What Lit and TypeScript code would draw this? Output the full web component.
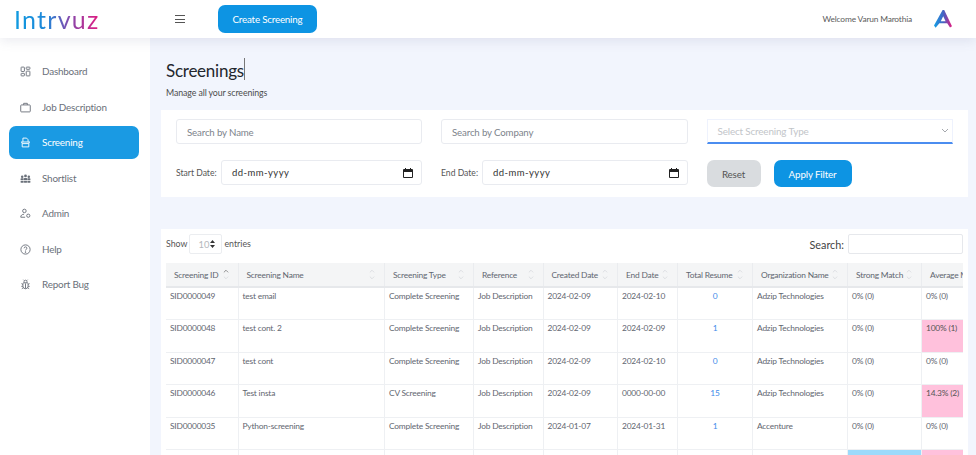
import { LitElement, html, css, svg } from "lit";
import { customElement } from "lit/decorators.js";

const icons: Record<string, unknown> = {
  dashboard: svg`<rect x="1.5" y="1.5" width="4.5" height="6" rx=".7"/><rect x="8.5" y="1.5" width="5" height="3" rx=".7"/><rect x="1.5" y="10" width="4.5" height="3.5" rx=".7"/><rect x="8.5" y="7" width="5" height="6.5" rx=".7"/>`,
  job: svg`<rect x="1" y="4" width="13" height="9.5" rx="1"/><path d="M5 4V1.8h5V4"/>`,
  screening: svg`<path d="M4 6.5V1.5h5l2 2.2v2.8M1.5 6.8h12M3 9h9v4.5H3zM3 9 2.4 6.8M12 9l.6-2.2"/>`,
  shortlist: svg`<g fill="currentColor" stroke="none"><circle cx="3" cy="5" r="1.7"/><circle cx="7.5" cy="4" r="1.9"/><circle cx="12" cy="5" r="1.7"/><rect x=".8" y="7.3" width="4.2" height="2.6" rx=".8"/><rect x="5.4" y="6.8" width="4.2" height="3.1" rx=".8"/><rect x="10" y="7.3" width="4.2" height="2.6" rx=".8"/><rect x=".8" y="10.8" width="4.2" height="2.4" rx=".6"/><rect x="5.4" y="10.8" width="4.2" height="2.4" rx=".6"/><rect x="10" y="10.8" width="4.2" height="2.4" rx=".6"/></g>`,
  admin: svg`<circle cx="6" cy="4" r="2.4"/><path d="M1 12.5c0-2.6 2-4 4.5-4"/><path d="M1 12.6h6"/><circle cx="11.3" cy="10.5" r="2.2"/>`,
  help: svg`<circle cx="7.5" cy="7.5" r="6.3"/><path d="M5.6 5.8c0-1.2.9-1.9 1.9-1.9s2 .7 2 1.8c0 1.5-2 1.6-2 3.2"/><circle cx="7.5" cy="11" r=".5" fill="currentColor"/>`,
  bug: svg`<path d="M5 5.2h5a1.3 1.3 0 0 1 1 1.2v3.4a3.5 3.5 0 0 1-7 0V6.4a1.3 1.3 0 0 1 1-1.2zM5.5 5V3.6a2 2 0 0 1 4 0V5M7.5 6v7M4 7.5 2 6.3M11 7.5l2-1.2M4 10H1.8M11 10h2.2M4.3 12l-1.8 1.3M10.7 12l1.8 1.3M5.5 2 4.6 1M9.5 2l.9-1"/>`,
};

const nav = [
  ["dashboard", "Dashboard"],
  ["job", "Job Description"],
  ["screening", "Screening"],
  ["shortlist", "Shortlist"],
  ["admin", "Admin"],
  ["help", "Help"],
  ["bug", "Report Bug"],
];

const cols: [string, number][] = [
  ["Screening ID", 72],
  ["Screening Name", 146.5],
  ["Screening Type", 89],
  ["Reference", 69.5],
  ["Created Date", 74.5],
  ["End Date", 60],
  ["Total Resume", 75],
  ["Organization Name", 95],
  ["Strong Match", 74],
  ["Average Match", 90],
];

const rows: { c: string[]; pink?: boolean }[] = [
  { c: ["SID0000049", "test email", "Complete Screening", "Job Description", "2024-02-09", "2024-02-10", "0", "Adzip Technologies", "0% (0)", "0% (0)"] },
  { c: ["SID0000048", "test cont. 2", "Complete Screening", "Job Description", "2024-02-09", "2024-02-09", "1", "Adzip Technologies", "0% (0)", "100% (1)"], pink: true },
  { c: ["SID0000047", "test cont", "Complete Screening", "Job Description", "2024-02-09", "2024-02-10", "0", "Adzip Technologies", "0% (0)", "0% (0)"] },
  { c: ["SID0000046", "Test insta", "CV Screening", "Job Description", "2024-02-09", "0000-00-00", "15", "Adzip Technologies", "0% (0)", "14.3% (2)"], pink: true },
  { c: ["SID0000035", "Python-screening", "Complete Screening", "Job Description", "2024-01-07", "2024-01-31", "1", "Accenture", "0% (0)", "0% (0)"] },
];

@customElement("app-root")
export class AppRoot extends LitElement {
  static styles = css`
    :host { display: block; width: 976px; height: 455px; overflow: hidden; font-family: Lato, "Open Sans", sans-serif; color: #5f6670; background: #f2f5fd; }
    .top { height: 38px; background: #fff; display: flex; align-items: center; position: relative; z-index: 2; box-shadow: 0 3px 12px rgba(90,100,140,.13); }
    .logo { width: 175px; padding-left: 14px; box-sizing: border-box; }
    .logo span { font-size: 25px; font-weight: 400; letter-spacing: 1.25px; line-height: 30px; display: inline-block; margin-top: -1px; background: linear-gradient(90deg, #0f9be0 0%, #1f86d8 38%, #7d4db0 62%, #e4197f 100%); -webkit-background-clip: text; background-clip: text; color: transparent; }
    .burger { width: 10px; height: 6px; border-top: 1px solid #555; border-bottom: 1px solid #555; margin-right: 33px; box-sizing: content-box; }
    .burger::after { content: ""; display: block; height: 1px; background: #555; margin-top: 2.5px; }
    .create { width: 99px; height: 28px; border: none; border-radius: 7px; background: #0d94e3; color: #fff; font: 400 9.8px Lato, sans-serif; letter-spacing: -.2px; padding: 0; }
    .welcome { margin-left: auto; font-size: 8.4px; letter-spacing: -.18px; color: #5c5c5c; margin-right: 22px; }
    .mark { width: 18px; height: 18px; margin-right: 24px; }
    .body { display: flex; height: 417px; }
    .side { width: 150px; background: #fff; padding: 17px 11px 0 9px; box-sizing: border-box; flex: none; display: grid; grid-auto-rows: 33px; row-gap: 2.5px; align-content: start; }
    .item { display: flex; align-items: center; padding-left: 11px; font-size: 9.9px; letter-spacing: -.2px; color: #6a7079; border-radius: 7px; }
    .item span { margin-top: -1px; }
    .item svg { width: 11px; height: 11px; margin-right: 11px; fill: none; stroke: currentColor; stroke-width: 1.25; flex: none; }
    .item.on { background: #1a9ae3; color: #fff; }
    .main { flex: 1; min-width: 0; padding: 0 8px 0 11px; }
    h1 { margin: 21px 0 0 5px; font-size: 17px; letter-spacing: -.25px; line-height: 24px; font-weight: 400; color: #23272e; display: flex; }
    .caret { width: 1px; height: 22px; background: #777; margin-top: -1px; }
    .sub { margin: 4px 0 0 5px; font-size: 8.8px; letter-spacing: -.1px; line-height: 12px; color: #4c4c4c; }
    .filter { margin-top: 11px; background: #fff; height: 87px; box-sizing: border-box; padding: 9px 15px 0; display: grid; grid-template-columns: 246px 246.5px 246px; column-gap: 19px; grid-template-rows: 25px 27px; row-gap: 16px; }
    .field { border: 1px solid #e9ebf0; border-radius: 3px; display: flex; align-items: center; padding: 0 10px; box-sizing: border-box; font-size: 9.7px; letter-spacing: -.15px; color: #7d838b; background: #fff; }
    .type { border: 1px solid #eef2fd; border-bottom: 2px solid #4b8df0; border-radius: 0; color: #c2c5c9; justify-content: space-between; height: 24.5px; font-size: 9.9px; padding-right: 3px; }
    .type svg { width: 8px; height: 6px; fill: none; stroke: #a5a8ad; }
    .dategroup { display: flex; align-items: flex-start; }
    .dategroup label { font-size: 8.6px; color: #555; line-height: 26px; }
    .start label { width: 45px; }
    .end label { width: 41px; }
    .date { flex: 1; height: 25px; justify-content: space-between; color: #333; font-size: 9.5px; letter-spacing: .45px; padding-right: 8px; }
    .date svg { width: 10px; height: 10px; flex: none; }
    .btns { display: flex; gap: 13px; }
    .btns span { height: 27px; display: flex; align-items: center; justify-content: center; border-radius: 7px; font-size: 9.8px; letter-spacing: -.15px; }
    .reset { width: 54px; background: #d9dcdf; color: #555; }
    .apply { width: 78px; background: #0d94e3; color: #fff; }
    .card { margin-top: 32px; background: #fff; height: 240px; box-sizing: border-box; padding: 5px 5px 0; }
    .tools { display: flex; align-items: center; height: 20px; font-size: 8.8px; color: #555; }
    .tools > span:first-child, .tools > span:nth-child(3) { margin-top: -2px; }
    .len { width: 33px; height: 20px; border: 1px solid #ebedf0; box-sizing: border-box; margin: 0 2px 0 2px; display: flex; align-items: center; justify-content: flex-end; padding-right: 6px; color: #b5b8bc; font-size: 9.4px; border-radius: 2px; }
    .len svg { width: 5px; height: 8px; margin-left: 1px; }
    .srch { margin-left: auto; font-size: 10.8px; color: #444; }
    .srchbox { width: 115px; height: 20px; border: 1px solid #e6e8ec; border-radius: 2px; box-sizing: border-box; margin-left: 4px; }
    .wrap { margin-top: 9px; overflow: hidden; width: 797px; height: 192px; }
    table { border-collapse: collapse; table-layout: fixed; width: 845.5px; font-size: 8.4px; letter-spacing: -.2px; color: #5f6670; }
    th { height: 24px; box-sizing: border-box; background: #f4f5f6; font-weight: 400; text-align: left; padding: 0 8px; border-right: 1px solid #eaecef; border-bottom: 2px solid #e6e8eb; white-space: nowrap; overflow: hidden; }
    th div { display: flex; align-items: center; justify-content: space-between; }
    th svg { width: 6px; height: 13px; fill: none; stroke: #d6d8dc; stroke-width: .9; flex: none; margin-right: 1px; }
    th svg.act path:first-child { stroke: #777; }
    td { height: 32.5px; box-sizing: border-box; padding: 3px 4px 0; vertical-align: top; border-right: 1px solid #eef0f3; border-bottom: 1px solid #eef0f3; line-height: 11px; white-space: nowrap; overflow: hidden; }
    td.num { text-align: center; color: #3f8bea; }
    td.pink { background: #ffc1dc; color: #555; }
    td.blue { background: #9cdafb; }
  `;

  render() {
    const date = html`<svg viewBox="0 0 10 10"><path fill="#222" fill-rule="evenodd" d="M1 1h1V0h1v1h4V0h1v1h1a1 1 0 0 1 1 1v7a1 1 0 0 1-1 1H1a1 1 0 0 1-1-1V2a1 1 0 0 1 1-1zm0 3v5h8V4z"/></svg>`;
    return html`
      <div class="top">
        <div class="logo"><span>Intrvuz</span></div>
        <div class="burger"></div>
        <button class="create">Create Screening</button>
        <div class="welcome">Welcome Varun Marothia</div>
        <svg class="mark" viewBox="0 0 18 18">
          <defs><linearGradient id="m" x1="0" x2="1" y1="0" y2="0"><stop offset="0" stop-color="#12a0e6"/><stop offset=".55" stop-color="#4a5fc0"/><stop offset="1" stop-color="#e6187f"/></linearGradient></defs>
          <path fill="url(#m)" fill-rule="evenodd" d="M8.6 0 10.2 0 18 16.3 16 17.6 13.2 13.2H5.4L1.6 17.8 0 15.4zM9.2 6.3 6.8 11.2H11.6z"/>
        </svg>
      </div>
      <div class="body">
        <nav class="side">
          ${nav.map(([i, t]) => html`<div class="item ${i === "screening" ? "on" : ""}"><svg viewBox="0 0 15 15">${icons[i]}</svg><span>${t}</span></div>`)}
        </nav>
        <main class="main">
          <h1>Screenings<span class="caret"></span></h1>
          <p class="sub">Manage all your screenings</p>
          <section class="filter">
            <div class="field">Search by Name</div>
            <div class="field">Search by Company</div>
            <div class="field type"><span>Select Screening Type</span><svg viewBox="0 0 8 6"><path d="m1 1 3 3 3-3"/></svg></div>
            <div class="dategroup start"><label>Start Date:</label><div class="field date"><span>dd-mm-yyyy</span>${date}</div></div>
            <div class="dategroup end"><label>End Date:</label><div class="field date"><span>dd-mm-yyyy</span>${date}</div></div>
            <div class="btns"><span class="reset">Reset</span><span class="apply">Apply Filter</span></div>
          </section>
          <section class="card">
            <div class="tools">
              <span>Show</span>
              <div class="len"><span>10</span><svg viewBox="0 0 5 8"><path fill="#333" d="M2.5 0 5 3H0zM2.5 8 0 5h5z"/></svg></div>
              <span>entries</span>
              <span class="srch">Search:</span>
              <div class="srchbox"></div>
            </div>
            <div class="wrap">
              <table>
                <colgroup>${cols.map(([, w]) => html`<col style="width:${w}px" />`)}</colgroup>
                <thead><tr>
                  ${cols.map(([t], i) => html`<th><div><span>${t}</span><svg class="${i === 0 ? "act" : ""}" viewBox="0 0 7 13"><path d="m1 4 2.5-2.5L6 4"/><path d="m1 9 2.5 2.5L6 9"/></svg></div></th>`)}
                </tr></thead>
                <tbody>
                  ${rows.map((r) => html`<tr>${r.c.map((v, i) => html`<td class="${i === 6 ? "num" : ""} ${i === 9 && r.pink ? "pink" : ""}">${v}</td>`)}</tr>`)}
                  <tr>${cols.map((_, i) => html`<td class="${i === 8 ? "blue" : i === 9 ? "pink" : ""}"></td>`)}</tr>
                </tbody>
              </table>
            </div>
          </section>
        </main>
      </div>
    `;
  }
}
